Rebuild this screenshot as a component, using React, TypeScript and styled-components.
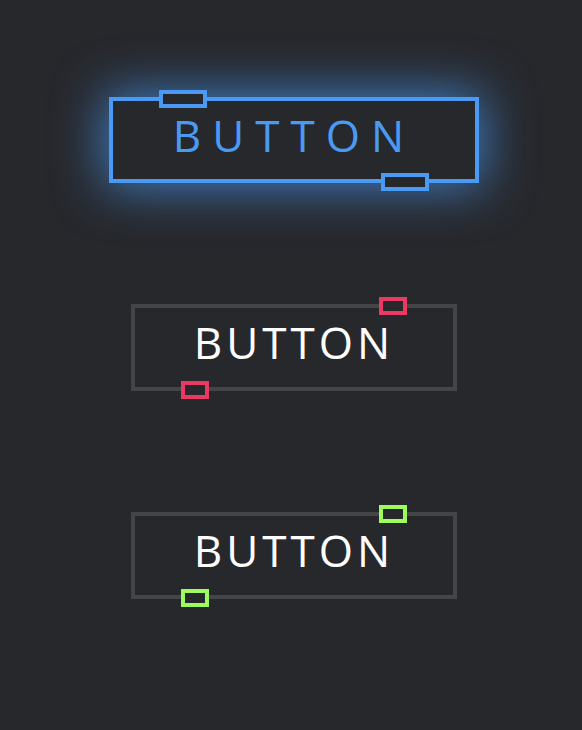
import React from 'react';
import styled, { createGlobalStyle, css } from 'styled-components';

const GlobalStyle = createGlobalStyle`
  html, body {
    margin: 0;
    padding: 0;
    background: #27282c;
  }
  body {
    font-family: 'Open Sans', 'Noto Sans', sans-serif;
  }
`;

type Accent = 'blue' | 'pink' | 'green';

const accentColors: Record<Accent, string> = {
  blue: '#4a9af4',
  pink: '#ea3a64',
  green: '#9ffb5c',
};

const Page = styled.div`
  display: flex;
  flex-direction: column;
  align-items: center;
  gap: 121px;
  padding: 97px 0 0 6px;
  min-height: 730px;
  box-sizing: border-box;
  background: #27282c;
`;

/** Outlined neon button; `active` shows the hovered/glowing state */
const NeonButton = styled.button<{ $active?: boolean }>`
  position: relative;
  box-sizing: border-box;
  width: 326px;
  height: 87px;
  margin: 0;
  background: #27282c;
  border: 4px solid #444546;
  color: #ffffff;
  font-family: 'Open Sans', 'Noto Sans', sans-serif;
  font-size: 44px;
  font-weight: 400;
  line-height: 60px;
  letter-spacing: 4px;
  padding: 4px 0 15px 0;
  text-align: center;
  white-space: nowrap;
  cursor: pointer;

  ${props =>
    props.$active &&
    css`
      width: 370px;
      height: 86px;
      border-color: #4a9af4;
      color: #4a9af4;
      letter-spacing: 11px;
      padding: 4px 0 14px 0;
      box-shadow: 0 0 50px 4px rgba(74, 154, 244, 0.75);
    `}
`;

/** Small outlined tab sitting on the button's top or bottom border */
const Tab = styled.span<{ $color: string; $edge: 'top' | 'bottom'; $side: 'left' | 'right'; $wide?: boolean }>`
  position: absolute;
  box-sizing: border-box;
  width: ${props => (props.$wide ? 48 : 28)}px;
  height: 18px;
  border: 4px solid ${props => props.$color};
  background: #27282c;
  ${props => (props.$edge === 'top' ? 'top: -11px;' : 'bottom: -12px;')}
  ${props => (props.$side === 'left' ? 'left: 46px;' : 'right: 46px;')}
`;

interface IButtonProps {
  accent: Accent;
  active?: boolean;
}

const GlowButton = ({ accent, active }: IButtonProps) => {
  const color = accentColors[accent];
  return (
    <NeonButton $active={active}>
      <Tab $color={color} $edge="top" $side={active ? 'left' : 'right'} $wide={active} />
      BUTTON
      <Tab $color={color} $edge="bottom" $side={active ? 'right' : 'left'} $wide={active} />
    </NeonButton>
  );
};

export default function App() {
  return (
    <>
      <GlobalStyle />
      <Page>
        <GlowButton accent="blue" active />
        <GlowButton accent="pink" />
        <GlowButton accent="green" />
      </Page>
    </>
  );
}
